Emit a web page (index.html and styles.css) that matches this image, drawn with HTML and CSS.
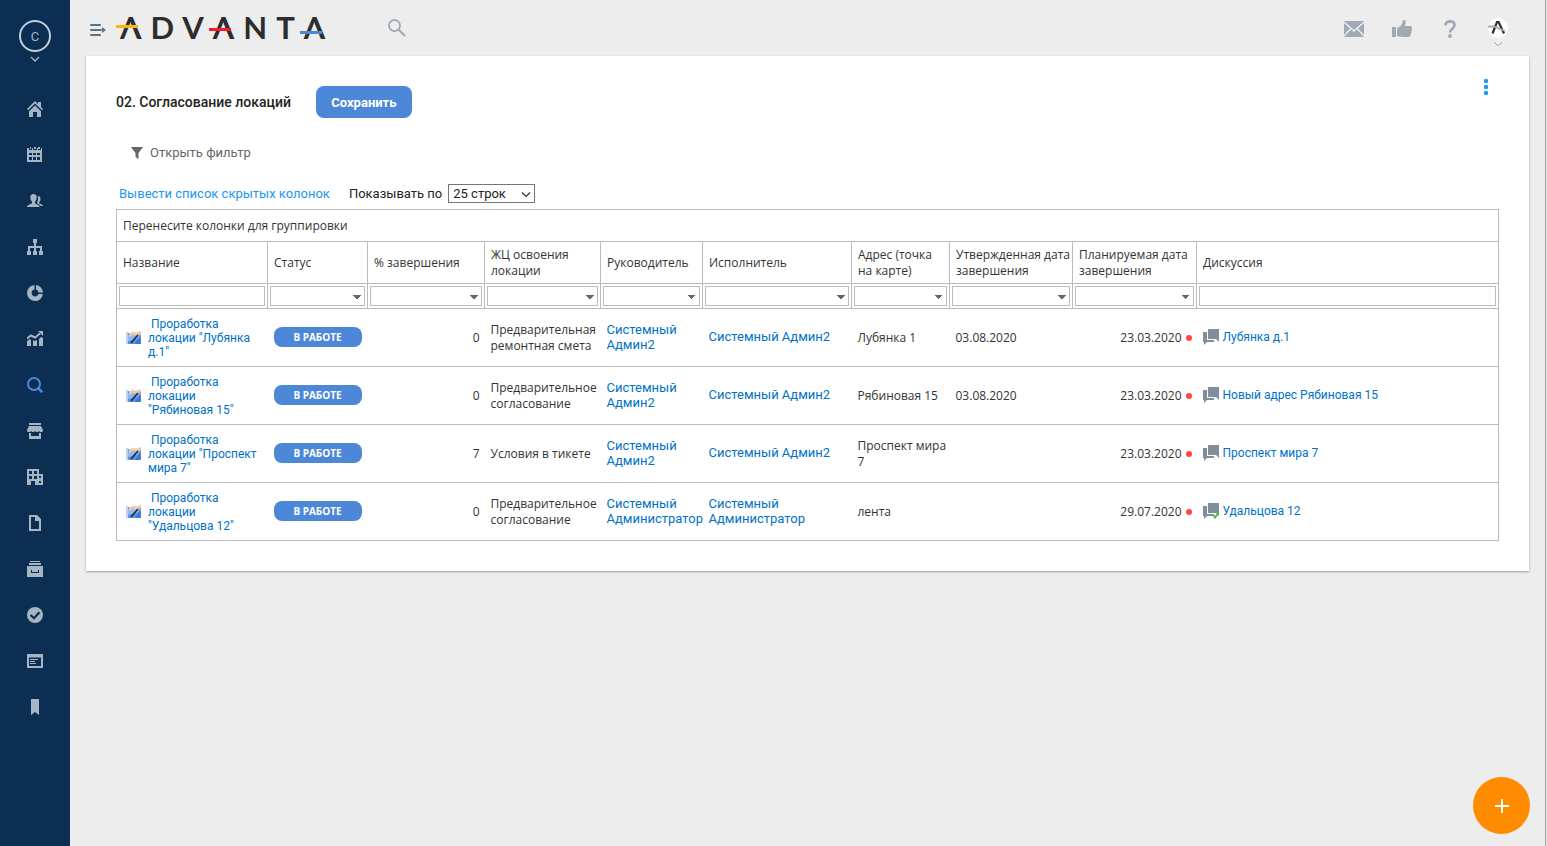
FILE: index.html
```html
<!DOCTYPE html>
<html lang="ru">
<head>
    <meta charset="UTF-8">
    <meta name="viewport" content="width=device-width, initial-scale=1.0">
    <title>02. Согласование локаций - ADVANTA</title>
    <link rel="stylesheet" href="styles.css">
</head>
<body>
    <aside class="sidebar">
        <button class="user-btn" aria-label="Профиль">
            <span class="user-circle">C</span>
            <svg width="10" height="6" viewBox="0 0 10 6"><path d="M1 1l4 4 4-4" fill="none" stroke="currentColor" stroke-width="1.3"/></svg>
        </button>
        <nav class="menu">
            <a href="#" aria-label="Главная"><svg viewBox="0 0 16 16"><path d="M8 0L0 8l1 1.200 7-6.700 7 6.700L16 8l-2-2V1h-3v2zM2 10.200V16h4v-5h4v5h4v-5.800L8 4.500z"/></svg></a>
            <a href="#" aria-label="Календарь"><svg viewBox="0 1 16 16"><path fill-rule="evenodd" d="M0 2h2v2h3V2h1v2h4V2h1v2h3V2h1v14H0zM2 7v2h3V7zM6 7v2h3V7zM10 7v2h3V7zM2 11v3h3v-3zM6 11v3h3v-3zM10 11v3h3v-3zM3 1h1v2H3zM7 1h2v2H7zM11 1h2v2h-2z"/></svg></a>
            <a href="#" aria-label="Команда"><svg viewBox="0 0 16 16"><path d="M6.500 1C4.300 1 3.300 2.500 3.300 4.600c0 1.900.7 3.200 1.700 4.100v1.600L1 12.300C.3 12.700 0 13 0 14h12.500c0-1-.2-1.400-1-1.700L8 10.300V8.700c1-.9 1.700-2.200 1.700-4.100C9.700 2.500 8.700 1 6.500 1zM10.500 3c1.900-.2 3 .8 3 2.900 0 1.600-.5 2.700-1.300 3.400v1l3 1.500c.6.300.8.600.8 1.200h-2.200c-.3-.8-.8-1.200-1.600-1.600l-1.900-1V8.700c.9-1.400 1.100-4.200.2-5.700z"/></svg></a>
            <a href="#" aria-label="Структура"><svg viewBox="0 0 16 16"><path d="M6 0h4v4H6zM7 4h2v3h6v5h-2V9H9v3H7V9H3v3H1V7h6zM0 12h4v4H0zM6 12h4v4H6zM12 12h4v4h-4z"/></svg></a>
            <a href="#" aria-label="Аналитика"><svg viewBox="0 0 16 16"><path d="M7.500 0v4.500a3.500 3.500 0 1 0 4 4.500H16A8 8 0 1 1 7.500 0zM9 0a8 8 0 0 1 7 7.500h-4.500A3.500 3.500 0 0 0 9 4.500z"/></svg></a>
            <a href="#" aria-label="Показатели"><svg viewBox="0 0 16 16"><path d="M0 10l3-2 1 1v6H0zM6 9l2 1 2-1v6H6zM12 8l2-2 2 1v8h-4z"/><path d="M0 7.500l4-3 4 2 5-4" fill="none" stroke="currentColor" stroke-width="2"/><path d="M11 0h5v5z"/></svg></a>
            <a href="#" class="active" aria-label="Поиск"><svg viewBox="0 0 16 16"><circle cx="7" cy="7" r="6" fill="none" stroke="currentColor" stroke-width="2"/><path d="M11 11l4.300 4.300" stroke="currentColor" stroke-width="2.500"/></svg></a>
            <a href="#" aria-label="Магазин"><svg viewBox="0 0 16 16"><path d="M2 0h12v2H2zM2 3h12l2 4v1l-1 1h-2l-1-1-1 1H9L8 8 7 9H5L4 8 3 9H1L0 8V7zM2 10h2v3h8v-3h2v6H2z"/></svg></a>
            <a href="#" aria-label="Организации"><svg viewBox="0 0 16 16"><path fill-rule="evenodd" d="M0 0h12v5h4v11H8v-4H4v4H0zM2 2v3h3V2zM7 2v3h3V2zM2 7v3h3V7zM7 7v3h3V7zM12 7v2h2V7zM12 12v2h2v-2z"/></svg></a>
            <a href="#" aria-label="Документы"><svg viewBox="0 0 16 16"><path fill-rule="evenodd" d="M2 0h8l4 4v12H2zM4 2v12h8V6H8V2z"/></svg></a>
            <a href="#" aria-label="Архив"><svg viewBox="0 0 16 16"><path fill-rule="evenodd" d="M3 0h10v1H3zM2 2h12v2H2zM0 5h16v11H0zM4 9v3h8V9h-1v2H5V9z"/></svg></a>
            <a href="#" aria-label="Задачи"><svg viewBox="0 0 16 16"><circle cx="8" cy="8" r="8"/><path d="M3.500 8L7 11.200l5.500-6" fill="none" stroke="#0b2e52" stroke-width="2.200"/></svg></a>
            <a href="#" aria-label="Новости"><svg viewBox="0 0 16 16"><path fill-rule="evenodd" d="M0 1h16v14H0zM2 4.500V13h12V4.500zM3 6h8v1H3zM3 8h5v1H3zM3 10h6v1H3z"/></svg></a>
            <a href="#" aria-label="Закладки"><svg viewBox="0 0 16 16"><path d="M4 0h8v16l-4-3-4 3z"/></svg></a>
        </nav>
    </aside>

    <main class="main">
        <header class="topbar">
            <button class="icon-btn toggle" aria-label="Меню"><svg width="16" height="12" viewBox="0 0 16 12"><path d="M1 1h9M1 6h10M1 11h9" stroke="currentColor" stroke-width="2" stroke-linecap="round"/><path d="M12 3l4 3-4 3z" fill="currentColor"/></svg></button>
            <a href="#" class="logo" aria-label="ADVANTA"><span class="bar yellow">Λ</span>DV<span class="bar red">Λ</span>NT<span class="bar blue">Λ</span></a>
            <button class="icon-btn search" aria-label="Найти"><svg width="18" height="18" viewBox="0 0 18 18"><circle cx="6.500" cy="6.500" r="5.500" fill="none" stroke="currentColor" stroke-width="1.800"/><path d="M10.500 10.500l6.500 6.500" stroke="currentColor" stroke-width="2.200"/></svg></button>
            <div class="tools">
                <button class="icon-btn" aria-label="Сообщения"><svg width="20" height="16" viewBox="0 0 20 16"><path d="M0 0h20v16H0z" fill="currentColor"/><path d="M0 1l10 9 10-9M0 15l7-7.500M20 15l-7-7.500" fill="none" stroke="#ededed" stroke-width="1.500"/></svg></button>
                <button class="icon-btn" aria-label="Нравится"><svg width="20" height="18" viewBox="0 0 20 18"><path fill="currentColor" d="M0 7h4v10H0zM5 8c3-1 5-3 5.500-6C10.700.5 11 0 12 0c1.500 0 2 1.300 1.500 3L13 6h5c2 0 2.500 2 1.500 3 .8 1 .5 2-.3 2.700.4 1 .1 2-.8 2.500.2 1.800-.6 2.800-2.400 2.800h-5c-2.500 0-4-1-6-1z"/></svg></button>
                <button class="icon-btn help" aria-label="Помощь"><svg width="12" height="18" viewBox="0 0 12 18"><path d="M1.500 5.500C1.500 0 10.500 0 10.500 5c0 3.500-4.300 3.500-4.300 7.500" fill="none" stroke="currentColor" stroke-width="2.800"/><circle cx="6" cy="16" r="1.900" fill="currentColor"/></svg></button>
                <button class="icon-btn account" aria-label="Аккаунт">
                    <svg width="20" height="20" viewBox="0 0 20 20"><circle cx="10" cy="10" r="10" fill="#fff"/><path d="M4.500 15.500L9 4h1.600l5.400 11.500" fill="none" stroke="#2d2d2d" stroke-width="2.200"/><path d="M0 8.500h6l11 4.500" fill="none" stroke="#a0aab4" stroke-width="1.800"/></svg>
                    <svg width="10" height="4" viewBox="0 0 10 4"><path d="M1 .5l4 3 4-3" fill="none" stroke="currentColor"/></svg>
                </button>
            </div>
        </header>

        <section class="card">
            <div class="card-head">
                <h1>02. Согласование локаций</h1>
                <button class="save-btn">Сохранить</button>
                <button class="more-btn" aria-label="Ещё"><svg width="6" height="18" viewBox="0 0 6 18"><circle cx="3" cy="3" r="2.200"/><circle cx="3" cy="9" r="2.200"/><circle cx="3" cy="15" r="2.200"/></svg></button>
            </div>
            <button class="filter-btn"><svg width="13" height="12" viewBox="0 0 13 12"><path d="M1 0h12L8.500 6v6l-3-2V6z" fill="currentColor"/></svg>Открыть фильтр</button>
            <div class="options">
                <a href="#">Вывести список скрытых колонок</a>
                <label for="page-size">Показывать по</label>
                <span class="page-size">
                    <select id="page-size"><option>25 строк</option><option>50 строк</option></select>
                    <svg width="10" height="6" viewBox="0 0 10 6"><path d="M1 .5l4 4 4-4" fill="none" stroke="#333" stroke-width="1.200"/></svg>
                </span>
            </div>

            <table class="grid">
                <colgroup>
                    <col class="c-name"><col class="c-status"><col class="c-percent"><col class="c-stage"><col class="c-owner">
                    <col class="c-worker"><col class="c-address"><col class="c-approved"><col class="c-planned"><col>
                </colgroup>
                <thead>
                    <tr class="group-row"><td colspan="10">Перенесите колонки для группировки</td></tr>
                    <tr class="titles">
                        <th>Название</th>
                        <th>Статус</th>
                        <th>% завершения</th>
                        <th>ЖЦ освоения локации</th>
                        <th>Руководитель</th>
                        <th>Исполнитель</th>
                        <th>Адрес (точка<br>на карте)</th>
                        <th class="nowrap">Утвержденная дата<br>завершения</th>
                        <th class="nowrap">Планируемая дата<br>завершения</th>
                        <th>Дискуссия</th>
                    </tr>
                    <tr class="filters">
                        <td><input type="text" aria-label="Название"></td>
                        <td><select aria-label="Статус"><option></option></select></td>
                        <td><select aria-label="% завершения"><option></option></select></td>
                        <td><select aria-label="ЖЦ освоения локации"><option></option></select></td>
                        <td><select aria-label="Руководитель"><option></option></select></td>
                        <td><select aria-label="Исполнитель"><option></option></select></td>
                        <td><select aria-label="Адрес"><option></option></select></td>
                        <td><select aria-label="Утвержденная дата завершения"><option></option></select></td>
                        <td><select aria-label="Планируемая дата завершения"><option></option></select></td>
                        <td><input type="text" aria-label="Дискуссия"></td>
                    </tr>
                </thead>
                <tbody>
                    <tr>
                        <td><div class="name"><svg class="project-icon"><use href="#project"/></svg><a href="#">&nbsp;Проработка локации "Лубянка д.1"</a></div></td>
                        <td class="state"><span class="status">В РАБОТЕ</span></td>
                        <td class="num">0</td>
                        <td>Предварительная ремонтная смета</td>
                        <td class="person"><a href="#">Системный Админ2</a></td>
                        <td class="person"><a href="#">Системный Админ2</a></td>
                        <td>Лубянка 1</td>
                        <td>03.08.2020</td>
                        <td class="num"><span class="late">23.03.2020</span></td>
                        <td class="topic"><a href="#" class="talk"><svg><use href="#chat"/></svg>Лубянка д.1</a></td>
                    </tr>
                    <tr>
                        <td><div class="name"><svg class="project-icon"><use href="#project"/></svg><a href="#">&nbsp;Проработка локации "Рябиновая&nbsp;15"</a></div></td>
                        <td class="state"><span class="status">В РАБОТЕ</span></td>
                        <td class="num">0</td>
                        <td>Предварительное согласование</td>
                        <td class="person"><a href="#">Системный Админ2</a></td>
                        <td class="person"><a href="#">Системный Админ2</a></td>
                        <td>Рябиновая 15</td>
                        <td>03.08.2020</td>
                        <td class="num"><span class="late">23.03.2020</span></td>
                        <td class="topic"><a href="#" class="talk"><svg><use href="#chat"/></svg>Новый адрес Рябиновая 15</a></td>
                    </tr>
                    <tr>
                        <td><div class="name"><svg class="project-icon"><use href="#project"/></svg><a href="#">&nbsp;Проработка локации "Проспект мира 7"</a></div></td>
                        <td class="state"><span class="status">В РАБОТЕ</span></td>
                        <td class="num">7</td>
                        <td>Условия в тикете</td>
                        <td class="person"><a href="#">Системный Админ2</a></td>
                        <td class="person"><a href="#">Системный Админ2</a></td>
                        <td class="nowrap">Проспект мира<br>7</td>
                        <td></td>
                        <td class="num"><span class="late">23.03.2020</span></td>
                        <td class="topic"><a href="#" class="talk"><svg><use href="#chat"/></svg>Проспект мира 7</a></td>
                    </tr>
                    <tr>
                        <td><div class="name"><svg class="project-icon"><use href="#project"/></svg><a href="#">&nbsp;Проработка локации "Удальцова&nbsp;12"</a></div></td>
                        <td class="state"><span class="status">В РАБОТЕ</span></td>
                        <td class="num">0</td>
                        <td>Предварительное согласование</td>
                        <td class="person"><a href="#">Системный Администратор</a></td>
                        <td class="person"><a href="#">Системный<br>Администратор</a></td>
                        <td>лента</td>
                        <td></td>
                        <td class="num"><span class="late">29.07.2020</span></td>
                        <td class="topic"><a href="#" class="talk"><svg><use href="#chat"/><path d="M10 12l2 2.500L16 9" fill="none" stroke="#4fc13a" stroke-width="2"/></svg>Удальцова 12</a></td>
                    </tr>
                </tbody>
            </table>
        </section>
    </main>

    <button class="fab" aria-label="Добавить"><svg width="14" height="14" viewBox="0 0 14 14"><path d="M7 0v14M0 7h14" stroke="#fff" stroke-width="2"/></svg></button>

    <!-- shared table icons -->
    <svg class="sprite" aria-hidden="true">
        <symbol id="project" viewBox="0 0 16 16">
            <path d="M0 2h2v12H0z" fill="#b9d3f2"/>
            <path d="M2 3h13v11H2z" fill="#5b94e6"/>
            <path d="M2 5h13v3L2 11z" fill="#8fb8f0"/>
            <path d="M3 4l4-2 3 1 5-2v3l-4 2-4-1-4 2z" fill="#f3c3b4"/>
            <path d="M3 4l4-2 3 1 4-1" fill="none" stroke="#d9e2a8"/>
            <path d="M12 5L5 13" stroke="#1f2f4d" stroke-width="1.800"/>
            <path d="M14.500 5v9H9z" fill="#3b76d0"/>
        </symbol>
        <symbol id="chat" viewBox="0 0 16 16">
            <path d="M5 0h11v13l-3-3H5z" fill="#808d9b"/>
            <path d="M0 3h4v8h7v2H4l-3 3v-3H0z" fill="#808d9b"/>
        </symbol>
    </svg>
</body>
</html>
```

FILE: styles.css
```css
* { margin: 0; padding: 0; box-sizing: border-box; }
body {
    display: flex;
    min-height: 100vh;
    font-family: Roboto, Arial, sans-serif;
    font-size: 13px;
    color: #222;
    background: #dcdcdc;
}
button { border: none; background: none; font-family: inherit; cursor: pointer; }
a { color: #0072c6; text-decoration: none; }
svg { display: block; flex: none; }

/* Sidebar */
.sidebar {
    width: 70px;
    flex: none;
    background: #0b2e52;
    color: #a6b5c4;
}
.user-btn {
    display: flex;
    flex-direction: column;
    align-items: center;
    gap: 4px;
    width: 100%;
    height: 86px;
    padding-top: 20px;
    color: #a6b5c4;
}
.user-circle {
    width: 32px;
    height: 32px;
    border: 2px solid #c4ced8;
    border-radius: 50%;
    font-size: 13px;
    line-height: 29px;
}
.menu a {
    display: flex;
    align-items: center;
    justify-content: center;
    height: 46px;
    color: #a6b5c4;
}
.menu a.active { color: #4d88d8; }
.menu svg { width: 16px; height: 16px; fill: currentColor; }

/* Top bar */
.main {
    flex: 1;
    min-width: 0;
    margin-right: 1px;
    padding: 0 16px;
    background: #ededed;
    border-right: 1px solid #a8a8a8;
}
.topbar { display: flex; align-items: center; height: 56px; }
.icon-btn { color: #a0aab4; }
.toggle { margin: 4px 14px 0 4px; color: #5c7383; }
.logo {
    padding-bottom: 2px;
    color: #2d2d2d;
    font-family: Lato, sans-serif;
    font-size: 31px;
    font-weight: 700;
    line-height: 40px;
    letter-spacing: 9px;
}
.bar { position: relative; }
.bar::after {
    content: "";
    position: absolute;
    left: -4px;
    width: 22px;
    height: 3px;
}
.yellow::after { top: 17px; background: #fcb415; }
.red::after { top: 20px; background: #ed1c2e; }
.blue::after { top: 23px; background: #4d88d8; }
.search { margin-left: 54px; }
.tools { display: flex; align-items: center; gap: 28px; margin-left: auto; padding: 2px 21px 0 0; }
.tools .icon-btn { display: flex; flex-direction: column; align-items: center; justify-content: center; min-width: 20px; }
.tools .account { gap: 4px; padding-top: 6px; }

/* Card */
.card {
    padding: 30px;
    background: #fff;
    box-shadow: 0 1px 2px rgba(0, 0, 0, 0.35);
}
.card-head { display: flex; align-items: center; gap: 25px; height: 32px; }
.card-head h1 { font-size: 14px; font-weight: 500; line-height: 18px; }
.save-btn {
    width: 96px;
    height: 32px;
    border-radius: 8px;
    background: #4d88d8;
    color: #fff;
    font-size: 13px;
    font-weight: 700;
}
.more-btn { align-self: flex-start; margin: -8px 10px 0 auto; fill: #2196f3; }
.filter-btn {
    display: flex;
    align-items: center;
    gap: 7px;
    margin: 25px 0 0 14px;
    color: #666;
    font-size: 13px;
    line-height: 20px;
}
.options { display: flex; align-items: center; height: 20px; margin: 20px 0 6px 3px; }
.options a { color: #2196f3; }
.options label { margin: 0 6px 0 19px; }
.page-size { position: relative; }
.page-size select {
    display: block;
    appearance: none;
    width: 87px;
    height: 19px;
    padding-left: 4px;
    border: 1px solid #767676;
    background: #fff;
    color: #222;
    font: 13px Roboto, sans-serif;
}
.page-size svg { position: absolute; right: 4px; top: 8px; pointer-events: none; }

/* Table */
.grid {
    width: 100%;
    table-layout: fixed;
    border-collapse: collapse;
    border: 1px solid #bbb;
    font: 12px/16px "Open Sans", "Segoe UI", sans-serif;
    color: #333;
}
.grid tr { border-bottom: 1px solid #bbb; }
.grid th, .grid td { padding: 0 6px; text-align: left; font-weight: 400; vertical-align: middle; }
.c-name { width: 151px; }
.c-status { width: 100px; }
.c-percent { width: 117px; }
.c-stage { width: 116px; }
.c-owner { width: 102px; }
.c-worker { width: 149px; }
.c-address { width: 98px; }
.c-approved { width: 123px; }
.c-planned { width: 124px; }
.nowrap { white-space: nowrap; }
.group-row { height: 32px; }
.titles { height: 42px; }
.filters { height: 25px; }
.titles th, .filters td { border-left: 1px solid #bbb; }
.grid .filters td { padding: 2px; }
.filters input, .filters select {
    display: block;
    appearance: none;
    width: 100%;
    height: 20px;
    border: 1px solid #bbb;
    border-radius: 0;
    background: #fff;
}
.filters select {
    background-image: linear-gradient(to top right, transparent 50%, #666 50%), linear-gradient(to top left, transparent 50%, #666 50%);
    background-position: right 7px top 8px, right 3px top 8px;
    background-size: 4px 4px;
    background-repeat: no-repeat;
}
tbody tr { height: 58px; }
.name { display: flex; align-items: center; gap: 6px; padding-left: 3px; font: 12px/14px Roboto, sans-serif; }
.project-icon { width: 16px; height: 16px; }
.status {
    display: block;
    width: 88px;
    border-radius: 8px;
    background: #4d88d8;
    color: #fff;
    font-size: 10px;
    font-weight: 700;
    line-height: 20px;
    text-align: center;
}
.grid .num { padding-right: 5px; text-align: right; }
.grid .state, .grid .person, .grid .topic { padding-bottom: 2px; }
.person { font: 13px/15px Roboto, sans-serif; }
.late { display: flex; align-items: center; justify-content: flex-end; gap: 4px; }
.late::after {
    content: "";
    width: 6px;
    height: 6px;
    border-radius: 50%;
    background: #ff4545;
}
.talk { display: flex; align-items: center; gap: 4px; font: 12px/16px Roboto, sans-serif; }
.talk svg { width: 16px; height: 16px; }

.fab {
    position: fixed;
    right: 17px;
    bottom: 12px;
    display: flex;
    align-items: center;
    justify-content: center;
    width: 57px;
    height: 57px;
    border-radius: 50%;
    background: #ff8c00;
}
.sprite { position: absolute; width: 0; height: 0; }
```
